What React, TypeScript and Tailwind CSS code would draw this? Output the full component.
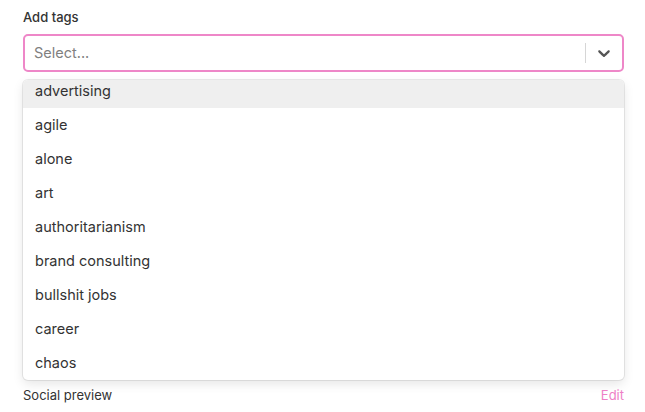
const tags = [
  'advertising',
  'agile',
  'alone',
  'art',
  'authoritarianism',
  'brand consulting',
  'bullshit jobs',
  'career',
  'chaos',
];

const App = () => {
  return (
    <div className="w-[645px] h-[412px] bg-white pl-[23px] pr-[21px] pt-[8px] font-['Inter',sans-serif] text-[#333] overflow-hidden">
      {/* Label */}
      <div className="text-[13px] font-medium leading-[18px]">Add tags</div>

      {/* Select control */}
      <div className="mt-[8px] h-[38px] flex items-center rounded-[5px] border-2 border-[#ee87c8]">
        <div className="flex-1 pl-[9px] text-[14.5px] text-[#808080]">Select...</div>
        <div className="w-px h-[20px] bg-[#d6d6d6]" />
        <div className="w-[36px] flex justify-center">
          <svg width="20" height="20" viewBox="0 0 20 20" fill="#555">
            <path d="M4.516 7.548c0.436-0.446 1.043-0.481 1.576 0l3.908 3.747 3.908-3.747c0.533-0.481 1.141-0.446 1.574 0 0.436 0.445 0.408 1.197 0 1.615-0.406 0.418-4.695 4.502-4.695 4.502-0.217 0.223-0.502 0.335-0.787 0.335s-0.57-0.112-0.789-0.335c0 0-4.287-4.084-4.695-4.502s-0.436-1.17 0-1.615z" />
          </svg>
        </div>
      </div>

      {/* Menu */}
      <div className="mt-[8px] h-[300px] rounded-[5px] bg-white overflow-hidden shadow-[0_0_0_1px_rgba(0,0,0,0.08),0_4px_11px_rgba(0,0,0,0.1)]">
        <ul className="-mt-[6px]">
          {tags.map((tag, i) => (
            <li
              key={tag}
              className={`h-[34px] flex items-center px-[12px] text-[14.5px] text-[#333] ${i === 0 ? 'bg-[#efefef]' : ''}`}
            >
              {tag}
            </li>
          ))}
        </ul>
      </div>

      {/* Social preview */}
      <div className="mt-[6px] flex justify-between items-center text-[13px] leading-[18px]">
        <span>Social preview</span>
        <span className="text-[#ee7fc6]">Edit</span>
      </div>
    </div>
  );
};

export default App;
